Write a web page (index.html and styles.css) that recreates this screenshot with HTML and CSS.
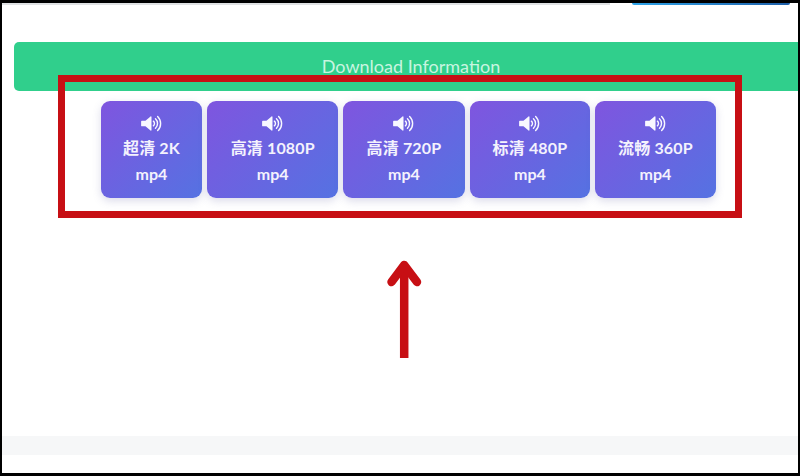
FILE: index.html
```html
<!DOCTYPE html>
<html lang="zh">
<head>
<meta charset="utf-8">
<title>Download Information</title>
<link rel="stylesheet" href="styles.css">
</head>
<body>
<svg width="0" height="0" class="defs" aria-hidden="true">
  <symbol id="vol" viewBox="0 0 22 18">
    <path d="M1 6h3.600L10 1.600c.5-.4 1-.1 1 .5v13.800c0 .6-.5.9-1 .5L4.600 12H1c-.5 0-1-.4-1-1V7c0-.5.5-1 1-1z" fill="currentColor"/>
    <path d="M13 6.500a3.300 3.300 0 0 1 0 5M15.200 4a6.800 6.800 0 0 1 0 10M17.500 1.500a10.500 10.500 0 0 1 0 15" fill="none" stroke="currentColor" stroke-width="1.500" stroke-linecap="round"/>
  </symbol>
</svg>
<main class="frame">
  <header class="top">
    <div class="search-line"></div>
    <div class="top-btn"></div>
  </header>
  <h2 class="banner">Download Information</h2>
  <section class="cards">
    <a class="card"><svg class="icon"><use href="#vol"/></svg><span class="q">超清 2K</span><span class="f">mp4</span></a>
    <a class="card"><svg class="icon"><use href="#vol"/></svg><span class="q">高清 1080P</span><span class="f">mp4</span></a>
    <a class="card"><svg class="icon"><use href="#vol"/></svg><span class="q">高清 720P</span><span class="f">mp4</span></a>
    <a class="card"><svg class="icon"><use href="#vol"/></svg><span class="q">标清 480P</span><span class="f">mp4</span></a>
    <a class="card"><svg class="icon"><use href="#vol"/></svg><span class="q">流畅 360P</span><span class="f">mp4</span></a>
  </section>
  <div class="band"></div>
  <div class="callout"></div>
  <svg class="arrow" viewBox="0 0 40 102" aria-hidden="true">
    <path d="M20.200 8V100" fill="none" stroke="#c70f14" stroke-width="8.500"/>
    <path d="M7.500 24L20.200 7L33 24" fill="none" stroke="#c70f14" stroke-width="8.500" stroke-linecap="round" stroke-linejoin="round"/>
  </svg>
</main>
</body>
</html>
```
FILE: styles.css
```css
* { box-sizing: border-box; }
html, body { margin: 0; padding: 0; background: #000; }
.defs { position: absolute; }
.frame {
  position: relative;
  width: 800px;
  height: 476px;
  border: solid #000;
  border-width: 3px 2px 3px 2px;
  background: #fff;
  display: flex;
  flex-direction: column;
  overflow: hidden;
  font-family: "Lato", "Noto Sans CJK SC", sans-serif;
}
.top {
  display: flex;
  justify-content: space-between;
  height: 39px;
  flex: none;
}
.search-line {
  width: 608px;
  height: 2px;
  background: #dfe1e3;
}
.top-btn {
  width: 158px;
  height: 2px;
  margin-right: 8px;
  border-radius: 0 0 5px 5px;
  background: linear-gradient(90deg, #2ea3e8, #1e5fa8);
}
.banner {
  flex: none;
  height: 49px;
  margin: 0 0 10px 12px;
  padding: 14px 0 0 10px;
  border-radius: 5px 0 0 5px;
  background: #30cf8c;
  color: #c8f5e0;
  font-size: 18px;
  font-weight: 400;
  line-height: 21px;
  text-align: center;
}
.cards {
  flex: none;
  display: flex;
  gap: 5px;
  padding-left: 98.700px;
}
.card {
  width: 120.500px;
  height: 97px;
  padding-top: 14px;
  border-radius: 9px;
  background: linear-gradient(135deg, #7f55df, #5572e2);
  box-shadow: 0 3px 8px rgba(90, 90, 160, .22);
  color: #f4f2fd;
  display: flex;
  flex-direction: column;
  align-items: center;
  white-space: nowrap;
}
.card:nth-child(1) { width: 101.500px; }
.card:nth-child(2) { width: 131px; }
.card:nth-child(3) { width: 121.500px; }
.icon { width: 21px; height: 17px; flex: none; color: #f8f8ff; }
.q { margin-top: 4px; font-size: 16px; line-height: 24px; font-weight: 700; letter-spacing: .15px; }
.f { margin-top: 4px; font-size: 16px; line-height: 20px; font-weight: 700; }
.band {
  flex: none;
  height: 19px;
  margin-top: 238px;
  background: #f6f7f8;
}
.callout {
  position: absolute;
  left: 56px;
  top: 72px;
  width: 684px;
  height: 143px;
  border: 7px solid #c70f14;
}
.arrow {
  position: absolute;
  left: 382px;
  top: 255px;
  width: 40px;
  height: 102px;
}
```
